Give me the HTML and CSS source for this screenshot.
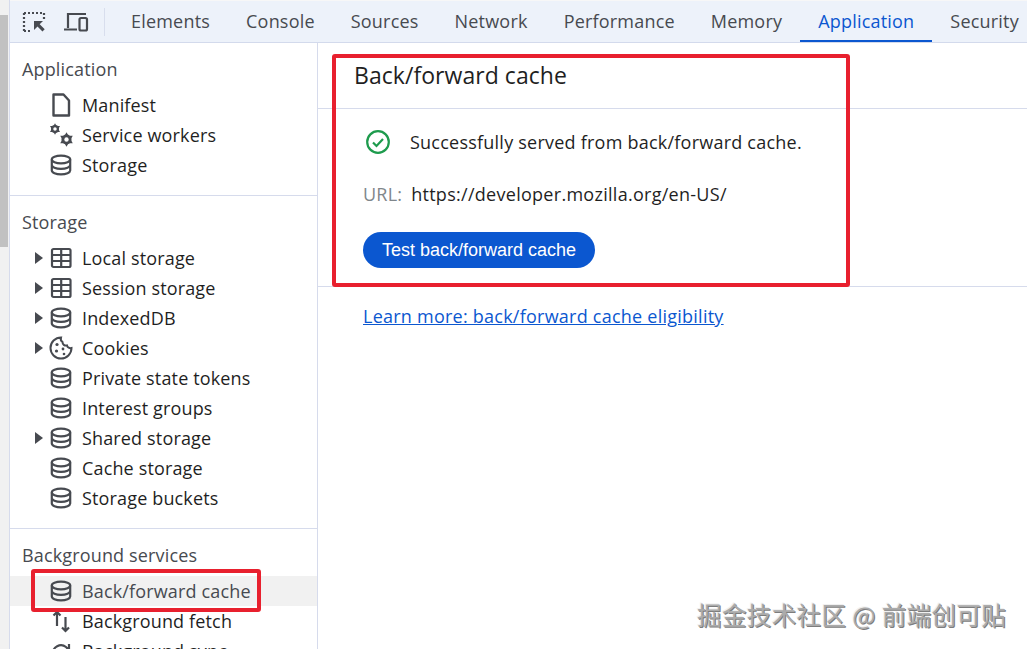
FILE: index.html
```html
<!DOCTYPE html>
<html lang="en">
<head>
    <meta charset="UTF-8">
    <meta name="viewport" content="width=device-width, initial-scale=1.0">
    <title>Back/forward cache</title>
    <link rel="stylesheet" href="styles.css">
</head>
<body>
    <svg class="defs" width="0" height="0">
        <symbol id="i-db" viewBox="0 0 22 22">
            <ellipse cx="11" cy="5.500" rx="9.200" ry="3.800" fill="none" stroke="currentColor" stroke-width="2.200"/>
            <path d="M1.800 5.500v11c0 2 4 3.800 9.200 3.800s9.200-1.800 9.200-3.800v-11M1.800 11c0 2 4 3.800 9.200 3.800s9.200-1.800 9.200-3.800" fill="none" stroke="currentColor" stroke-width="2.200"/>
        </symbol>
        <symbol id="i-table" viewBox="0 0 22 22">
            <rect x="2" y="2" width="18.500" height="18" rx="1.500" fill="none" stroke="currentColor" stroke-width="2.200"/>
            <path d="M2 8h18.500M2 14h18.500M11.200 2v18" fill="none" stroke="currentColor" stroke-width="2.200"/>
        </symbol>
        <symbol id="i-gear" viewBox="0 0 24 24">
            <path fill-rule="evenodd" d="M12 0.500L22 18H2z" fill="currentColor"/>
            <path d="M12 23.500L2 6h20z" fill="currentColor"/>
            <circle cx="12" cy="12" r="8" fill="currentColor"/>
            <circle cx="12" cy="12" r="3.500" fill="#fff"/>
        </symbol>
    </svg>

    <div class="gutter"><div class="thumb"></div></div>

    <div class="devtools">
        <header class="toolbar">
            <svg class="tool tool-inspect" width="24" height="24" viewBox="0 0 24 24">
                <path d="M2 3h20M2 3v18M22 3v8M2 21h6" fill="none" stroke="#474a50" stroke-width="2.200" stroke-dasharray="2 2"/>
                <path d="M12 11h9l-3.300 3.300 5 5-2.200 2.200-5-5L12 20z" fill="#474a50"/>
            </svg>
            <svg class="tool tool-device" width="26" height="22" viewBox="0 0 26 22">
                <path d="M5 17V3h18M1 18.500h13" fill="none" stroke="#474a50" stroke-width="2.200"/>
                <rect x="16.500" y="7" width="7.500" height="12.500" rx="1.500" fill="none" stroke="#474a50" stroke-width="2.200"/>
            </svg>
            <span class="tool-sep"></span>
            <nav class="tabs">
                <a class="tab">Elements</a>
                <a class="tab">Console</a>
                <a class="tab">Sources</a>
                <a class="tab">Network</a>
                <a class="tab">Performance</a>
                <a class="tab">Memory</a>
                <a class="tab active">Application</a>
                <a class="tab">Security</a>
            </nav>
        </header>

        <div class="panels">
            <aside class="sidebar">
                <section class="group">
                    <h3>Application</h3>
                    <ul>
                        <li>
                            <svg class="icon" width="22" height="24" viewBox="0 0 22 24"><path d="M3.500 1.500h10l5.500 6v15H3.500z" fill="none" stroke="currentColor" stroke-width="2.400" stroke-linejoin="round"/></svg>
                            Manifest
                        </li>
                        <li>
                            <svg class="icon icon-wide" width="26" height="26" viewBox="0 0 26 26"><use href="#i-gear" x="0" y="1" width="12" height="12"/><use href="#i-gear" x="10" y="10" width="15" height="15"/></svg>
                            Service workers
                        </li>
                        <li><svg class="icon" width="22" height="22"><use href="#i-db"/></svg>Storage</li>
                    </ul>
                </section>
                <section class="group">
                    <h3>Storage</h3>
                    <ul>
                        <li class="tree"><svg class="icon" width="22" height="22"><use href="#i-table"/></svg>Local storage</li>
                        <li class="tree"><svg class="icon" width="22" height="22"><use href="#i-table"/></svg>Session storage</li>
                        <li class="tree"><svg class="icon" width="22" height="22"><use href="#i-db"/></svg>IndexedDB</li>
                        <li class="tree">
                            <svg class="icon icon-cookie" width="24" height="24" viewBox="0 0 24 24"><path d="M12 1.500a10.500 10.500 0 1 0 10.500 10.500c-2 .5-4-.5-4.500-2.500-2.500.5-4.500-1-4.500-3.500-1.500-1-2-3-1.500-4.500z" fill="none" stroke="currentColor" stroke-width="2"/><circle cx="8" cy="8.500" r="1.600" fill="currentColor"/><circle cx="7.500" cy="15" r="1.600" fill="currentColor"/><circle cx="14" cy="13" r="1.400" fill="currentColor"/><circle cx="15" cy="18" r="1.300" fill="currentColor"/></svg>
                            Cookies
                        </li>
                        <li><svg class="icon" width="22" height="22"><use href="#i-db"/></svg>Private state tokens</li>
                        <li><svg class="icon" width="22" height="22"><use href="#i-db"/></svg>Interest groups</li>
                        <li class="tree"><svg class="icon" width="22" height="22"><use href="#i-db"/></svg>Shared storage</li>
                        <li><svg class="icon" width="22" height="22"><use href="#i-db"/></svg>Cache storage</li>
                        <li><svg class="icon" width="22" height="22"><use href="#i-db"/></svg>Storage buckets</li>
                    </ul>
                </section>
                <section class="group">
                    <h3>Background services</h3>
                    <ul>
                        <li class="selected"><svg class="icon" width="22" height="22"><use href="#i-db"/></svg>Back/forward cache</li>
                        <li>
                            <svg class="icon" width="22" height="24" viewBox="0 0 22 24"><path d="M7 17V3M3.500 6.500L7 3l3.500 3.500M15.500 8v14M12 18.500l3.500 3.500 3.500-3.500" fill="none" stroke="currentColor" stroke-width="2.200"/></svg>
                            Background fetch
                        </li>
                        <li>
                            <svg class="icon" width="22" height="22" viewBox="0 0 22 22"><path d="M3 14a8 8 0 0 1 13-7l3 3M19 4v6h-6" fill="none" stroke="currentColor" stroke-width="2.200"/></svg>
                            Background sync
                        </li>
                    </ul>
                </section>
            </aside>

            <main class="content">
                <h1 class="title">Back/forward cache</h1>
                <section class="report">
                    <div class="status">
                        <svg width="24" height="24" viewBox="0 0 24 24"><circle cx="12" cy="12" r="10.800" fill="none" stroke="#1e9b4d" stroke-width="2.200"/><path d="M7 12.500l3.500 3.500 6.500-7" fill="none" stroke="#1e9b4d" stroke-width="2.200"/></svg>
                        <span>Successfully served from back/forward cache.</span>
                    </div>
                    <div class="url"><span class="url-label">URL:</span><span class="url-value">https://developer.mozilla.org/en-US/</span></div>
                    <button class="test-btn">Test back/forward cache</button>
                </section>
                <a class="learn" href="#">Learn more: back/forward cache eligibility</a>
            </main>
        </div>
    </div>

    <div class="mark mark-main"></div>
    <div class="mark mark-side"></div>
    <div class="watermark">掘金技术社区 @ 前端创可贴</div>
</body>
</html>
```

FILE: styles.css
```css
* {
    box-sizing: border-box;
}
html, body {
    height: 100%;
}
body {
    margin: 0;
    display: flex;
    height: 649px;
    overflow: hidden;
    position: relative;
    background-color: #fff;
    color: #1f1f1f;
    font-family: "Open Sans", "Noto Sans", sans-serif;
    font-size: 18px;
}
.defs {
    position: absolute;
}
.gutter {
    width: 10px;
    flex: none;
    background-color: #f1f1f1;
    border-right: 1px solid #d6dbec;
    padding-top: 15px;
}
.thumb {
    width: 8px;
    height: 232px;
    background-color: #c1c1c1;
}
.devtools {
    flex: 1;
    min-width: 0;
    display: flex;
    flex-direction: column;
}
.toolbar {
    height: 43px;
    flex: none;
    display: flex;
    align-items: center;
    padding-left: 12px;
    overflow: hidden;
    background-color: #edf2fa;
    border-top: 1px solid #f7f7f7;
    border-bottom: 1px solid #d3daec;
}
.tool {
    flex: none;
}
.tool-inspect {
    margin-right: 17px;
}
.tool-sep {
    width: 1px;
    height: 28px;
    flex: none;
    margin-left: 15px;
    background-color: #d8deed;
}
.tabs {
    display: flex;
    flex: none;
    align-self: stretch;
    margin-left: 8px;
}
.tab {
    display: flex;
    align-items: center;
    padding: 0 18px;
    color: #474a50;
    letter-spacing: 0.2px;
    white-space: nowrap;
    border-bottom: 2px solid transparent;
}
.tab.active {
    color: #0b57d0;
    border-bottom-color: #0b57d0;
}
.panels {
    flex: 1;
    min-height: 0;
    display: flex;
}
.sidebar {
    width: 308px;
    flex: none;
    border-right: 1px solid #d6dbec;
    letter-spacing: 0.15px;
}
.group {
    padding-top: 11px;
    padding-bottom: 15px;
    border-bottom: 1px solid #d6dbec;
}
.group h3 {
    margin: 0;
    height: 30px;
    line-height: 30px;
    padding-left: 12px;
    font-size: 18px;
    font-weight: 400;
    color: #474a50;
}
.group ul {
    list-style: none;
    margin: 6px 0 0;
    padding: 0;
}
.group:last-child {
    border-bottom: none;
}
.group li {
    position: relative;
    height: 30px;
    display: flex;
    align-items: center;
    padding-left: 40px;
    color: #1f1f1f;
    white-space: nowrap;
}
.group li.selected {
    background-color: #f1f1f1;
    color: #474a50;
}
.icon {
    width: 22px;
    flex: none;
    margin-right: 10px;
    color: #474a50;
}
.icon-wide {
    width: 26px;
    margin-left: -1px;
    margin-right: 7px;
}
.icon-cookie {
    width: 24px;
    margin-left: -1px;
    margin-right: 9px;
}
.tree::before {
    content: "";
    position: absolute;
    left: 25px;
    top: 9px;
    border-style: solid;
    border-width: 6px 0 6px 8px;
    border-color: transparent transparent transparent #474a50;
}
.content {
    flex: 1;
    min-width: 0;
}
.title {
    margin: 0;
    height: 66px;
    padding: 16px 0 0 36px;
    font-size: 23px;
    line-height: 32px;
    font-weight: 400;
    letter-spacing: 0.05px;
    border-bottom: 1px solid #d6dbec;
}
.report {
    height: 178px;
    padding: 20px 0 0 45px;
    border-bottom: 1px solid #d6dbec;
}
.status {
    display: flex;
    align-items: center;
    gap: 20px;
    margin-left: 3px;
    height: 26px;
    letter-spacing: 0.23px;
}
.url {
    display: flex;
    gap: 9px;
    height: 26px;
    line-height: 26px;
    margin-top: 26px;
}
.url-label {
    color: #80868b;
    letter-spacing: 0.2px;
}
.url-value {
    letter-spacing: 0.28px;
}
.test-btn {
    display: block;
    margin-top: 25px;
    width: 232px;
    height: 36px;
    padding: 0;
    border: none;
    border-radius: 18px;
    background-color: #0b57d0;
    color: #fff;
    font-family: "Liberation Sans", Arial, sans-serif;
    font-size: 18px;
}
.learn {
    display: block;
    margin: 16px 0 0 45px;
    line-height: 26px;
    letter-spacing: 0.24px;
    color: #0b57d0;
}
.mark {
    position: absolute;
    border: 4px solid #e8202e;
    border-radius: 3px;
}
.mark-main {
    left: 332px;
    top: 54px;
    width: 518px;
    height: 233px;
}
.mark-side {
    left: 31px;
    top: 569px;
    width: 230px;
    height: 43px;
}
.watermark {
    position: absolute;
    left: 697px;
    top: 598px;
    font-family: "Noto Sans CJK SC", sans-serif;
    font-size: 24.500px;
    line-height: 34px;
    letter-spacing: 0.4px;
    white-space: nowrap;
    color: #ababab;
    text-shadow: 1px 1px 0 #7d7d7d, -1px -1px 0 #f0f0f0;
}
```
